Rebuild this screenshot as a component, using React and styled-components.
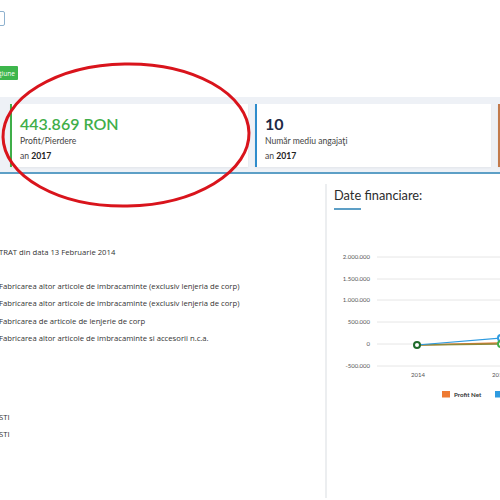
import styled, { createGlobalStyle } from 'styled-components';

const GlobalStyle = createGlobalStyle`
  html, body {
    margin: 0;
    padding: 0;
    background: #ffffff;
  }
  body {
    font-family: Lato, "Open Sans", sans-serif;
    color: #333;
  }
`;

const Page = styled.div`
  position: relative;
  width: 500px;
  height: 500px;
  overflow: hidden;
  background: #fff;
`;

const TopArea = styled.div`
  height: 97px;
  padding-top: 11px;
  box-sizing: border-box;
`;

const SearchBox = styled.div`
  width: 40px;
  height: 13px;
  margin-left: -37px;
  border: 1px solid #8fb2cf;
  border-radius: 2px;
`;

const ActionButton = styled.button`
  display: block;
  margin-top: 40px;
  margin-left: -11px;
  height: 14px;
  padding: 0 3px;
  border: none;
  border-radius: 1px;
  background: #3db64c;
  color: #fff;
  font-family: "Open Sans", sans-serif;
  font-size: 6.5px;
`;

const StatsStrip = styled.div`
  display: flex;
  gap: 7px;
  padding: 7px 0 5px 10px;
  background: #eef1f6;
  border-bottom: 2px solid #5d9fc6;
`;

const StatCard = styled.div`
  flex: 0 0 ${(p) => p.width}px;
  height: 63px;
  box-sizing: border-box;
  padding: 10px 0 0 8px;
  background: #fff;
  border-left: 2px solid ${(p) => p.accent};
  box-shadow: 0 1px 2px rgba(0, 0, 0, 0.05);
`;

const StatValue = styled.div`
  font-family: Lato, sans-serif;
  font-size: 16px;
  font-weight: ${(p) => (p.bold ? 700 : 600)};
  color: ${(p) => p.color};
  line-height: 20px;
`;

const StatLabel = styled.div`
  font-family: Lato, sans-serif;
  font-size: 8.6px;
  color: #444;
  line-height: 15px;

  b {
    color: #222;
  }
`;

const Main = styled.div`
  display: grid;
  grid-template-columns: 325px 1fr;
  height: 322px;
  margin-top: 10px;
  border-bottom: 2px solid #eceef3;
`;

const InfoColumn = styled.div`
  padding-top: 60px;
  margin-left: -1px;
`;

const InfoLine = styled.div`
  font-family: "Open Sans", sans-serif;
  font-size: 7.7px;
  color: #333;
  line-height: 17.5px;
  margin-top: ${(p) => p.gap || 0}px;
  white-space: nowrap;
`;

const ChartColumn = styled.div`
  border-left: 2px solid #eceef0;
  padding-left: 7px;
  margin-bottom: 8px;
`;

const ChartTitle = styled.h3`
  margin: 2px 0 0;
  font-family: Lato, sans-serif;
  font-weight: 400;
  font-size: 12.8px;
  color: #2b2b2b;
  line-height: 18px;

  &::after {
    content: '';
    display: block;
    width: 27px;
    height: 2px;
    margin-top: 4px;
    background: #5d9fc6;
  }
`;

const Chart = styled.svg`
  display: block;
  margin: 20px 0 0 -9px;
  overflow: visible;
`;

const Highlight = styled.svg`
  position: absolute;
  left: 0;
  top: 0;
  pointer-events: none;
`;

const yTicks = [
  ['2.000.000', 27],
  ['1.500.000', 49],
  ['1.000.000', 70],
  ['500.000', 92],
  ['0', 114],
  ['-500.000', 136],
];

const FinanceChart = () => (
  <Chart width="175" height="180" fontFamily="Lato, sans-serif">
    {yTicks.map(([label, y]) => (
      <g key={label}>
        <line x1="52" x2="180" y1={y} y2={y} stroke="#e6e6e6" strokeWidth="1" />
        <text x="45" y={y + 2} fontSize="6" fill="#555" textAnchor="end">
          {label}
        </text>
      </g>
    ))}
    <text x="93" y="147" fontSize="6" fill="#555" textAnchor="middle">2014</text>
    <text x="174" y="147" fontSize="6" fill="#555" textAnchor="middle">2015</text>
    <polyline points="92,115 176,113" fill="none" stroke="#e0782f" strokeWidth="1.5" />
    <polyline points="92,115 176,114" fill="none" stroke="#8d8a3c" strokeWidth="1.5" />
    <polyline points="92,115 176,108" fill="none" stroke="#2e9be0" strokeWidth="1.2" />
    <circle cx="176" cy="108" r="3" fill="#fff" stroke="#2e9be0" strokeWidth="2" />
    <circle cx="176" cy="114" r="3" fill="#fff" stroke="#3fae49" strokeWidth="2" />
    <circle cx="92" cy="115" r="3" fill="#fff" stroke="#1e6a2a" strokeWidth="2" />
    <rect x="117" y="161" width="8" height="6.5" fill="#ee7a32" />
    <text x="129" y="167" fontSize="6.2" fontWeight="700" fill="#333">Profit Net</text>
    <rect x="170" y="161" width="8" height="6.5" fill="#2e9be0" />
  </Chart>
);

const App = () => (
  <Page>
    <GlobalStyle />
    <TopArea>
      <SearchBox />
      <ActionButton>Acţiune</ActionButton>
    </TopArea>

    <StatsStrip>
      <StatCard width={238} accent="#3fae49">
        <StatValue color="#3fae49">443.869 RON</StatValue>
        <StatLabel>
          Profit/Pierdere
          <br />
          an <b>2017</b>
        </StatLabel>
      </StatCard>
      <StatCard width={236} accent="#2e8ccc">
        <StatValue color="#1d2a45" bold>10</StatValue>
        <StatLabel>
          Număr mediu angajaţi
          <br />
          an <b>2017</b>
        </StatLabel>
      </StatCard>
      <StatCard width={120} accent="#c27a4c" />
    </StatsStrip>

    <Main>
      <InfoColumn>
        <InfoLine>TRAT din data 13 Februarie 2014</InfoLine>
        <InfoLine gap={16}>Fabricarea altor articole de imbracaminte (exclusiv lenjeria de corp)</InfoLine>
        <InfoLine>Fabricarea altor articole de imbracaminte (exclusiv lenjeria de corp)</InfoLine>
        <InfoLine>Fabricarea de articole de lenjerie de corp</InfoLine>
        <InfoLine>Fabricarea altor articole de imbracaminte si accesorii n.c.a.</InfoLine>
        <InfoLine gap={61}>STI</InfoLine>
        <InfoLine>STI</InfoLine>
      </InfoColumn>
      <ChartColumn>
        <ChartTitle>Date financiare:</ChartTitle>
        <FinanceChart />
      </ChartColumn>
    </Main>

    <Highlight width="500" height="500">
      <ellipse
        cx="126"
        cy="135"
        rx="123"
        ry="71"
        fill="none"
        stroke="#d9141c"
        strokeWidth="3"
        transform="rotate(-1 126 135)"
      />
    </Highlight>
  </Page>
);

export default App;
